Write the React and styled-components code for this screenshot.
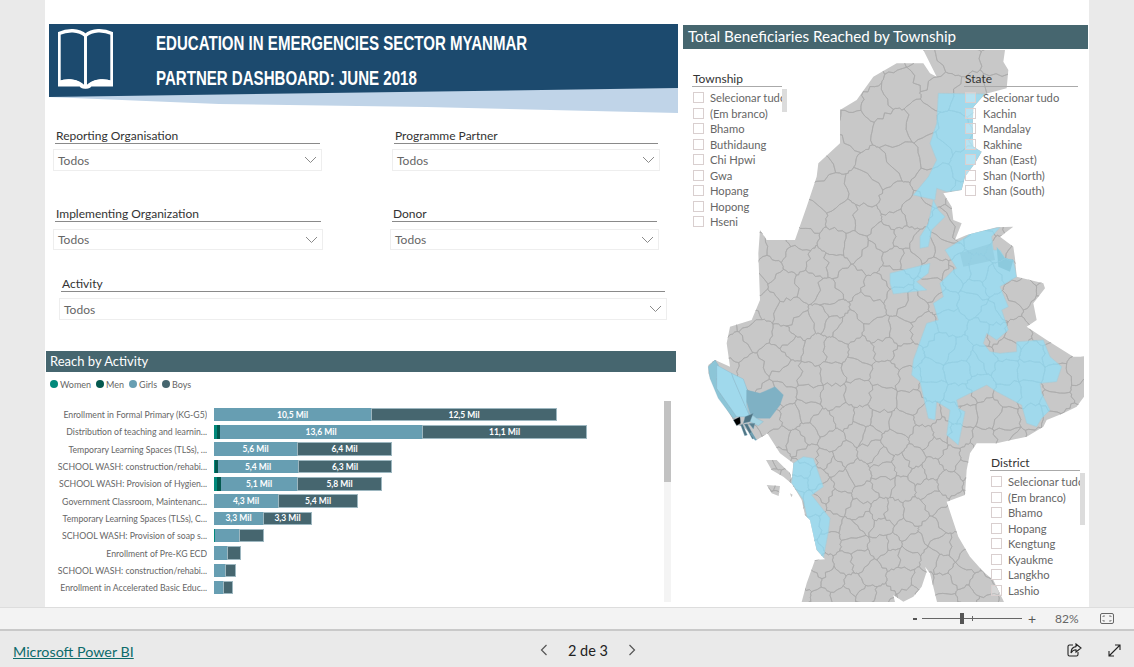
import React, { useMemo } from "react";
import styled, { createGlobalStyle } from "styled-components";

const Global = createGlobalStyle`
  html, body { margin: 0; padding: 0; background: #eaeaea; }
  body { font-family: "Lato", "Noto Sans", sans-serif; overflow: hidden; }
  * { box-sizing: border-box; }
`;

const Page = styled.div`
  width: 1134px; height: 667px; display: flex; flex-direction: column; overflow: hidden; background: #eaeaea;
`;
const Stage = styled.div`
  height: 607px; padding-left: 45px; flex: none; overflow: hidden;
`;
const Canvas = styled.main`
  width: 1044px; height: 607px; background: #fff; display: flex;
`;
const LeftCol = styled.section`
  width: 635px; flex: none; padding-top: 24px; display: flex; flex-direction: column;
`;
const RightCol = styled.section`
  width: 409px; flex: none; padding-top: 25px; position: relative; display: flex; flex-direction: column;
`;

/* banner */
const Wedge = styled.div`
  margin-left: 4px; width: 629px; height: 89px; background: #c0d4e8;
  clip-path: polygon(0 0, 100% 0, 100% 100%, 60% 83px, 27% 80px, 0 73px);
`;
const Banner = styled.header`
  height: 100%; background: #1c4a6e; display: flex; padding: 4px 0 0 9px;
  clip-path: polygon(0 0, 100% 0, 100% 64px, 0 73px);
`;
const Titles = styled.div`
  margin-left: 43px; padding-top: 5px; display: flex; flex-direction: column; gap: 15px;
`;
const BannerLine = styled.h1`
  margin: 0; font: bold 20px/20px "Liberation Sans", sans-serif; color: #fff; white-space: nowrap;
  transform: scaleX(0.753); transform-origin: left center;
`;

/* slicers */
const FilterRow = styled.div`
  display: flex; margin-top: ${p => p.$top}px;
`;
const Slicer = styled.div`
  width: ${p => p.$w}px; margin-left: ${p => p.$x}px; flex: none; display: flex; flex-direction: column;
`;
const SlicerTitle = styled.div`
  margin: 0 2px; height: 17px; border-bottom: 1px solid #8a8a8a; font-size: 12px; line-height: 17px; color: #333; white-space: nowrap;
  padding-left: 1px;
`;
const Dropdown = styled.div`
  height: ${p => p.$h}px; margin-top: ${p => p.$gap}px; border: 1px solid #eeeeee; display: flex; align-items: center; justify-content: space-between;
  padding: 0 4px; font-size: 12px; color: #666;
`;

/* chart */
const SectionBar = styled.h2`
  margin: ${p => p.$mt || 0}px 0 0 ${p => p.$ml}px; width: ${p => p.$w}px; height: ${p => p.$h}px; background: #46666f; color: #fff; font-weight: 400;
  font-size: ${p => p.$fs}px; line-height: ${p => p.$lh}px; padding-left: ${p => p.$pl}px; white-space: nowrap; flex: none;
`;
const Legend = styled.div`
  display: flex; gap: 5px; height: 24px; padding: 0 0 0 5px; align-items: center; font-size: 9px; color: #666;
`;
const LegendItem = styled.span`
  display: flex; align-items: center; gap: 2px;
`;
const Dot = styled.i`
  width: 8px; height: 8px; border-radius: 50%; background: ${p => p.$c}; display: block;
`;
const ChartBody = styled.div`
  display: flex; height: 206px; padding-top: 5px;
`;
const Rows = styled.div`
  flex: none; width: 619px; padding-top: 5px; display: flex; flex-direction: column;
`;
const Row = styled.div`
  height: 17.3px; display: flex; align-items: center; flex: none;
`;
const RowLabel = styled.div`
  width: 162px; margin-right: 7px; text-align: right; font-size: 8.7px; color: #666; white-space: nowrap; overflow: hidden;
`;
const Bar = styled.div`
  display: flex; height: 13.5px;
`;
const Seg = styled.div`
  background: ${p => p.$c}; color: #fff; font-size: 8.5px; font-weight: 700; display: flex; align-items: center; justify-content: center;
  border: 0 solid #9db7c0; border-width: ${p => (p.$edge ? "1px" : "0")}; white-space: nowrap;
`;
const ScrollTrack = styled.div`
  width: 7px; height: 201px; background: #f4f4f4; flex: none;
`;
const ScrollThumb = styled.div`
  width: 100%; height: 81px; background: #c2c2c2;
`;

/* map */
const MapSvg = styled.svg`
  display: block; width: 409px; height: 552px; flex: none; margin-top: 1px;
`;
const Floating = styled.div`
  position: absolute; left: ${p => p.$x}px; top: ${p => p.$y}px; width: ${p => p.$w}px; height: ${p => p.$h}px;
`;
const FloatTitle = styled.div`
  height: 15px; line-height: 13px; font-size: 12px; color: #333; border-bottom: 1px solid #aaa; margin: 0 ${p => p.$mr}px 3px -1px; padding-left: 1px;
`;
const Item = styled.div`
  height: 15.5px; display: flex; align-items: center; gap: ${p => p.$gap}px; font-size: 11.2px; color: #666; white-space: nowrap;
`;
const Check = styled.span`
  width: 11px; height: 11px; border: 1px solid #d9cfcf; flex: none; background: rgba(255,255,255,.25);
`;
const MiniThumb = styled.div`
  position: absolute; right: 0; top: ${p => p.$top}px; width: 5px; height: ${p => p.$h}px; background: #dcdcdc;
`;

/* bars */
const ZoomBar = styled.div`
  height: 24px; background: #f3f3f3; border-top: 1px solid #dddddd; border-bottom: 2px solid #c9c9c9; display: flex; align-items: center;
  padding-left: 913px; color: #666; font-size: 12px; flex: none;
`;
const Minus = styled.span`
  width: 4px; height: 2px; background: #555; flex: none;
`;
const Slider = styled.div`
  margin-left: 5px; width: 100px; height: 1px; background: #666; position: relative; flex: none;
`;
const Knob = styled.span`
  position: absolute; left: 38px; top: -5px; width: 4px; height: 11px; background: #555;
`;
const Tick = styled.span`
  position: absolute; left: 50px; top: -2px; width: 1px; height: 5px; background: #666;
`;
const Plus = styled.span`
  margin-left: 6px; font-size: 14px; line-height: 14px; color: #555; width: 12px;
`;
const Pct = styled.span`
  margin-left: 15px; width: 30px; font-size: 12px;
`;
const Footer = styled.footer`
  height: 36px; flex: none; display: flex; align-items: center; background: #eaeaea; padding: 2px 0 0 13px;
`;
const BrandLink = styled.a`
  font-size: 14.3px; color: #0d6b6b; text-decoration: underline; width: 120px; white-space: nowrap; flex: none; padding-top: 2px;
`;
const Pager = styled.div`
  margin-left: 407px; display: flex; align-items: center; gap: 18px; flex: none; color: #222; font-size: 14.5px;
`;
const PageLabel = styled.span`
  width: 44px; text-align: center; white-space: nowrap;
`;
const Tools = styled.div`
  margin-left: auto; padding-right: 13px; display: flex; gap: 26px; align-items: center;
`;

const Caret = () => (
  <svg width="13" height="8" viewBox="0 0 13 8"><path d="M1 1l5.500 5.500L12 1" fill="none" stroke="#8a8a8a" strokeWidth="1" /></svg>
);

const BookIcon = () => (
  <svg width="55" height="64" viewBox="0 0 56 64" style={{ flex: "none" }}>
    <path d="M1 5C10 1 21 1 28 7C35 1 46 1 55 5V55C46 52 36 53 30 59H26C20 53 10 52 1 55Z" fill="none" stroke="#fff" strokeWidth="3.500" />
    <path d="M28 7V58" stroke="#fff" strokeWidth="3" />
    <path d="M0 54C9 50 20 51 26 58H30C36 51 47 50 56 54V59H34C32 62 24 62 22 59H0Z" fill="#fff" />
  </svg>
);

const WOMEN = "#01897b", MEN = "#04594f", GIRLS = "#679eb2", BOYS = "#46666f";
const ROWS = [
  ["Enrollment in Formal Primary (KG-G5)", 0, 0, 157, 186, "10,5 Mil", "12,5 Mil"],
  ["Distribution of teaching and learnin...", 3, 3, 202, 165, "13,6 Mil", "11,1 Mil"],
  ["Temporary Learning Spaces (TLSs), ...", 0, 0, 83, 95, "5,6 Mil", "6,4 Mil"],
  ["SCHOOL WASH: construction/rehabi...", 1, 3, 80, 94, "5,4 Mil", "6,3 Mil"],
  ["SCHOOL WASH: Provision of Hygien...", 3, 4, 76, 85, "5,1 Mil", "5,8 Mil"],
  ["Government Classroom, Maintenanc...", 0, 0, 64, 80, "4,3 Mil", "5,4 Mil"],
  ["Temporary Learning Spaces (TLSs), C...", 0, 0, 49, 49, "3,3 Mil", "3,3 Mil"],
  ["SCHOOL WASH: Provision of soap s...", 1, 0, 24, 25, "", ""],
  ["Enrollment of Pre-KG ECD", 0, 0, 13, 14, "", ""],
  ["SCHOOL WASH: construction/rehabi...", 0, 0, 11, 11, "", ""],
  ["Enrollment in Accelerated Basic Educ...", 0, 0, 9, 10, "", ""],
];

/* ---------- map drawing, in units of 1/3 px ---------- */
const W = 1227, TOP = 90, BOT = 1746;
const OUTLINE = [[730,90],[975,90],[970,125],[985,150],[980,205],[915,222],[880,262],[878,330],[880,380],[905,395],[885,430],[855,470],[845,510],[790,520],[815,560],[820,600],[845,610],[825,660],[860,645],[950,622],[1000,620],[960,650],[1000,680],[1005,715],[1010,770],[1090,790],[1095,805],[1060,850],[1070,900],[1040,920],[1100,960],[1180,1010],[1212,1010],[1212,1130],[1190,1160],[1150,1180],[1100,1200],[1090,1220],[1040,1250],[950,1270],[890,1270],[870,1300],[860,1350],[855,1425],[800,1445],[835,1550],[870,1610],[910,1655],[940,1680],[972,1746],[771,1746],[750,1660],[735,1640],[740,1655],[725,1700],[700,1730],[670,1745],[640,1725],[645,1746],[365,1746],[380,1690],[405,1620],[435,1618],[410,1590],[390,1500],[375,1485],[365,1440],[335,1390],[340,1330],[300,1300],[262,1240],[230,1260],[190,1220],[170,1215],[160,1200],[110,1120],[85,1060],[85,1035],[105,1020],[150,1040],[140,970],[150,920],[215,900],[240,840],[235,700],[240,630],[260,660],[345,660],[380,560],[410,470],[415,430],[480,370],[480,270],[530,240],[580,170],[650,130],[730,130],[750,160],[770,170]];
const ISLANDS = [[[258,1320],[290,1320],[330,1360],[340,1395],[310,1370],[275,1350]],[[260,1395],[300,1398],[296,1428],[275,1420]],[[330,1420],[338,1424],[334,1432]]];
const BLUE = [
  [[775,220],[915,222],[880,262],[878,330],[880,380],[905,395],[885,430],[855,470],[845,510],[800,515],[770,505],[765,540],[700,525],[745,470],[770,420],[750,370],[770,310]],
  [[760,540],[775,570],[795,590],[755,630],[745,680],[720,685],[720,650],[745,610]],
  [[795,690],[860,650],[870,640],[960,622],[935,650],[940,690],[960,690],[975,715],[1000,720],[1010,770],[960,800],[985,860],[965,870],[985,930],[950,960],[920,940],[910,970],[930,995],[960,1000],[1010,995],[1010,965],[1090,960],[1110,1010],[1145,1040],[1130,1085],[1080,1090],[1085,1120],[1110,1170],[1085,1195],[1070,1220],[1040,1210],[1025,1155],[950,1115],[920,1095],[830,1140],[835,1165],[855,1175],[835,1275],[800,1245],[810,1170],[770,1145],[765,1200],[745,1195],[720,1085],[695,1065],[700,1020],[740,910],[775,900],[760,850],[790,830],[780,790],[820,750],[830,745]],
  [[630,760],[750,730],[745,760],[710,785],[740,810],[640,822],[630,790]],
  [[370,1310],[400,1315],[430,1400],[395,1425],[450,1495],[445,1535],[430,1615],[410,1590],[385,1510],[370,1440],[335,1390],[340,1330]],
];
const o = (a) => a.map(([x, y]) => [60 + x, 1005 + y]);
const RAKHINE = [
  ["#8cc5d7", o([[25,35],[45,15],[55,30],[50,70],[50,100],[110,185],[100,190],[55,130],[30,70]])],
  ["#a0d9ec", o([[50,30],[95,55],[100,70],[130,140],[150,185],[110,185],[50,100]])],
  ["#a0d9ec", o([[95,55],[130,72],[142,105],[140,150],[150,185],[130,140],[100,70]])],
  ["#7fb1c4", o([[140,105],[180,115],[225,95],[250,120],[240,150],[210,190],[170,190],[150,175],[140,140]])],
  ["#a7d5e3", o([[148,175],[170,190],[190,200],[175,212],[150,200]])],
  ["#4f7483", o([[135,185],[160,175],[150,200],[130,205]])],
  ["#4f7483", o([[122,210],[128,208],[142,240],[134,242]])],
  ["#4f7483", o([[133,208],[142,206],[165,250],[157,252]])],
  ["#5a8090", o([[147,205],[165,205],[160,222]])],
  ["#6f9fb1", o([[150,235],[155,232],[170,255],[165,256]])],
  ["#000", o([[100,195],[120,185],[122,205],[110,212]])],
];
const pts = a => a.map(p => p.join(",")).join(" ");
const pathOf = a => "M" + a.map(p => p.join(" ")).join("L") + "Z";

function buildCells() {
  let s = 12345;
  const rnd = () => ((s = (s * 16807) % 2147483647) / 2147483647);
  const seeds = [];
  let y = TOP - 40, odd = false;
  while (y < BOT + 60) {
    const st = y < 600 ? 105 : y < 1150 ? 74 : 62;
    for (let x = odd ? 0 : st / 2; x < W + st; x += st) {
      seeds.push([x + (rnd() - 0.5) * st * 0.8, y + (rnd() - 0.5) * st * 0.8]);
    }
    y += st * 0.88;
    odd = !odd;
  }
  const clip = (poly, a, b, c) => {
    const out = [];
    for (let i = 0; i < poly.length; i++) {
      const p = poly[i], q = poly[(i + 1) % poly.length];
      const dp = a * p[0] + b * p[1] - c, dq = a * q[0] + b * q[1] - c;
      if (dp <= 0) out.push(p);
      if (dp * dq < 0) {
        const t = dp / (dp - dq);
        out.push([p[0] + (q[0] - p[0]) * t, p[1] + (q[1] - p[1]) * t]);
      }
    }
    return out;
  };
  const hash = n => { const v = Math.sin(n * 12.9898) * 43758.5453; return v - Math.floor(v) - 0.5; };
  const edge = (p, q) => {
    const swap = p[0] > q[0] || (p[0] === q[0] && p[1] > q[1]);
    const [a, b] = swap ? [q, p] : [p, q];
    const dx = b[0] - a[0], dy = b[1] - a[1];
    const n = a[0] * 7 + a[1] * 13 + b[0] * 17 + b[1] * 23;
    const mids = [0.2, 0.4, 0.6, 0.8].map((t, k) => {
      const h = hash(n + k * 5) * 0.22;
      return [a[0] + dx * t - dy * h, a[1] + dy * t + dx * h];
    });
    const seq = swap ? [...mids.reverse(), q] : [...mids, q];
    return seq.map(v => `${v[0].toFixed(1)} ${v[1].toFixed(1)}`).join("L");
  };
  let d = "";
  seeds.forEach((p, i) => {
    let poly = [[-100, 0], [W + 100, 0], [W + 100, BOT + 100], [-100, BOT + 100]];
    seeds.forEach((q, j) => {
      if (i === j) return;
      const a = q[0] - p[0], b = q[1] - p[1];
      if (a * a + b * b > 160000) return;
      poly = clip(poly, a, b, (q[0] * q[0] + q[1] * q[1] - p[0] * p[0] - p[1] * p[1]) / 2);
    });
    if (poly.length < 3) return;
    const r = poly.map(v => [Math.round(v[0]), Math.round(v[1])]);
    d += `M${r[0][0]} ${r[0][1]}`;
    r.forEach((v, k) => { d += "L" + edge(v, r[(k + 1) % r.length]); });
    d += "Z";
  });
  return d;
}

const MyanmarMap = () => {
  const cells = useMemo(buildCells, []);
  const land = pathOf(OUTLINE) + ISLANDS.map(pathOf).join("");
  const blueD = BLUE.map(pathOf).join("");
  return (
    <MapSvg viewBox={`0 ${TOP} ${W} ${BOT - TOP}`}>
      <defs>
        <clipPath id="land"><path d={land} /></clipPath>
        <clipPath id="blue"><path d={blueD} /></clipPath>
      </defs>
      <path d={land} fill="#c8c8c8" />
      <g clipPath="url(#land)">
        <path d={cells} fill="none" stroke="#aaaaaa" strokeWidth="2.2" />
        {BLUE.map((b, i) => <polygon key={i} points={pts(b)} fill="#a0d9ec" stroke="#a9cbd7" strokeWidth="2" />)}
        <path d="M840 700L870 690L935 670L945 720L850 740Z" fill="#96d0e3" />
        <path d="M950 680L975 715L1000 720L990 755L955 740Z" fill="#8ccadd" />
        <g clipPath="url(#blue)"><path d={cells} fill="none" stroke="#94cfe3" strokeWidth="2" /></g>
      </g>
      {RAKHINE.map(([c, p], i) => <polygon key={i} points={pts(p)} fill={c} stroke="#7fb1c4" strokeWidth="1" />)}
    </MapSvg>
  );
};

const ListSlicer = ({ x, y, w, h, title, items, gap, thumb, mr }) => (
  <Floating $x={x} $y={y} $w={w} $h={h}>
    <FloatTitle $mr={mr}>{title}</FloatTitle>
    {items.map(t => <Item key={t} $gap={gap}><Check />{t}</Item>)}
    {thumb && <MiniThumb $top={thumb[0]} $h={thumb[1]} />}
  </Floating>
);

const Select = ({ x, w, title, h = 22, gap = 5 }) => (
  <Slicer $x={x} $w={w}>
    <SlicerTitle>{title}</SlicerTitle>
    <Dropdown $h={h} $gap={gap}>Todos<Caret /></Dropdown>
  </Slicer>
);

export default function App() {
  return (
    <Page>
      <Global />
      <Stage>
        <Canvas>
          <LeftCol>
            <Wedge>
              <Banner>
                <BookIcon />
                <Titles>
                  <BannerLine>EDUCATION IN EMERGENCIES SECTOR MYANMAR</BannerLine>
                  <BannerLine>PARTNER DASHBOARD: JUNE 2018</BannerLine>
                </Titles>
              </Banner>
            </Wedge>
            <FilterRow $top={14}>
              <Select x={8} w={269} title="Reporting Organisation" />
              <Select x={70} w={268} title="Programme Partner" />
            </FilterRow>
            <FilterRow $top={34}>
              <Select x={8} w={270} title="Implementing Organization" h={21} gap={7} />
              <Select x={67} w={269} title="Donor" h={21} gap={7} />
            </FilterRow>
            <FilterRow $top={25}>
              <Select x={14} w={608} title="Activity" gap={6} />
            </FilterRow>
            <SectionBar $mt={31} $ml={1} $w={630} $h={21} $lh={20} $fs={13} $pl={4}>Reach by Activity</SectionBar>
            <Legend>
              <LegendItem><Dot $c={WOMEN} />Women</LegendItem>
              <LegendItem><Dot $c={MEN} />Men</LegendItem>
              <LegendItem><Dot $c={GIRLS} />Girls</LegendItem>
              <LegendItem><Dot $c={BOYS} />Boys</LegendItem>
            </Legend>
            <ChartBody>
              <Rows>
                {ROWS.map(([label, w, m, g, b, gl, bl], i) => (
                  <Row key={i}>
                    <RowLabel>{label}</RowLabel>
                    <Bar>
                      {w > 0 && <Seg $c={WOMEN} style={{ width: w }} />}
                      {m > 0 && <Seg $c={MEN} style={{ width: m }} />}
                      <Seg $c={GIRLS} style={{ width: g }}>{gl}</Seg>
                      <Seg $c={BOYS} $edge style={{ width: b }}>{bl}</Seg>
                    </Bar>
                  </Row>
                ))}
              </Rows>
              <ScrollTrack><ScrollThumb /></ScrollTrack>
            </ChartBody>
          </LeftCol>
          <RightCol>
            <SectionBar $ml={3} $w={405} $h={24} $lh={22} $fs={15.2} $pl={5}>Total Beneficiaries Reached by Township</SectionBar>
            <MyanmarMap />
            <ListSlicer x={13} y={72} w={94} h={160} mr={5} gap={6} title="Township" thumb={[17, 23]}
              items={["Selecionar tudo", "(Em branco)", "Bhamo", "Buthidaung", "Chi Hpwi", "Gwa", "Hopang", "Hopong", "Hseni"]} />
            <ListSlicer x={285} y={72} w={113} h={130} mr={0} gap={7} title="State"
              items={["Selecionar tudo", "Kachin", "Mandalay", "Rakhine", "Shan (East)", "Shan (North)", "Shan (South)"]} />
            <ListSlicer x={311} y={456} w={94} h={146} mr={5} gap={6} title="District" thumb={[17, 52]}
              items={["Selecionar tudo", "(Em branco)", "Bhamo", "Hopang", "Kengtung", "Kyaukme", "Langkho", "Lashio"]} />
          </RightCol>
        </Canvas>
      </Stage>
      <ZoomBar>
        <Minus />
        <Slider><Knob /><Tick /></Slider>
        <Plus>+</Plus>
        <Pct>82%</Pct>
        <svg width="14" height="11" viewBox="0 0 14 11" style={{ marginLeft: 15 }}>
          <rect x=".5" y=".5" width="13" height="10" rx="1.500" fill="none" stroke="#666" />
          <path d="M3 4V3H5M9 3H11V4M11 7V8H9M5 8H3V7" fill="none" stroke="#666" strokeWidth=".8" />
        </svg>
      </ZoomBar>
      <Footer>
        <BrandLink>Microsoft Power BI</BrandLink>
        <Pager>
          <svg width="8" height="12" viewBox="0 0 8 12"><path d="M6.500 1L1.500 6l5 5" fill="none" stroke="#555" strokeWidth="1.200" /></svg>
          <PageLabel>2 de 3</PageLabel>
          <svg width="8" height="12" viewBox="0 0 8 12"><path d="M1.500 1l5 5-5 5" fill="none" stroke="#555" strokeWidth="1.200" /></svg>
        </Pager>
        <Tools>
          <svg width="15" height="14" viewBox="0 0 15 14">
            <path d="M6 2H2.500A1.500 1.500 0 0 0 1 3.500V11.500A1.500 1.500 0 0 0 2.500 13H9.500A1.500 1.500 0 0 0 11 11.500V9" fill="none" stroke="#222" strokeWidth="1.100" />
            <path d="M9 1L14 5L9 9V6.800C6.500 6.800 5 8 4 10C4 6.500 6 4 9 3.600Z" fill="none" stroke="#222" strokeWidth="1.100" />
          </svg>
          <svg width="13" height="13" viewBox="0 0 13 13">
            <path d="M1 12L12 1M7 1H12V6M1 7V12H6" fill="none" stroke="#222" strokeWidth="1.100" />
          </svg>
        </Tools>
      </Footer>
    </Page>
  );
}
